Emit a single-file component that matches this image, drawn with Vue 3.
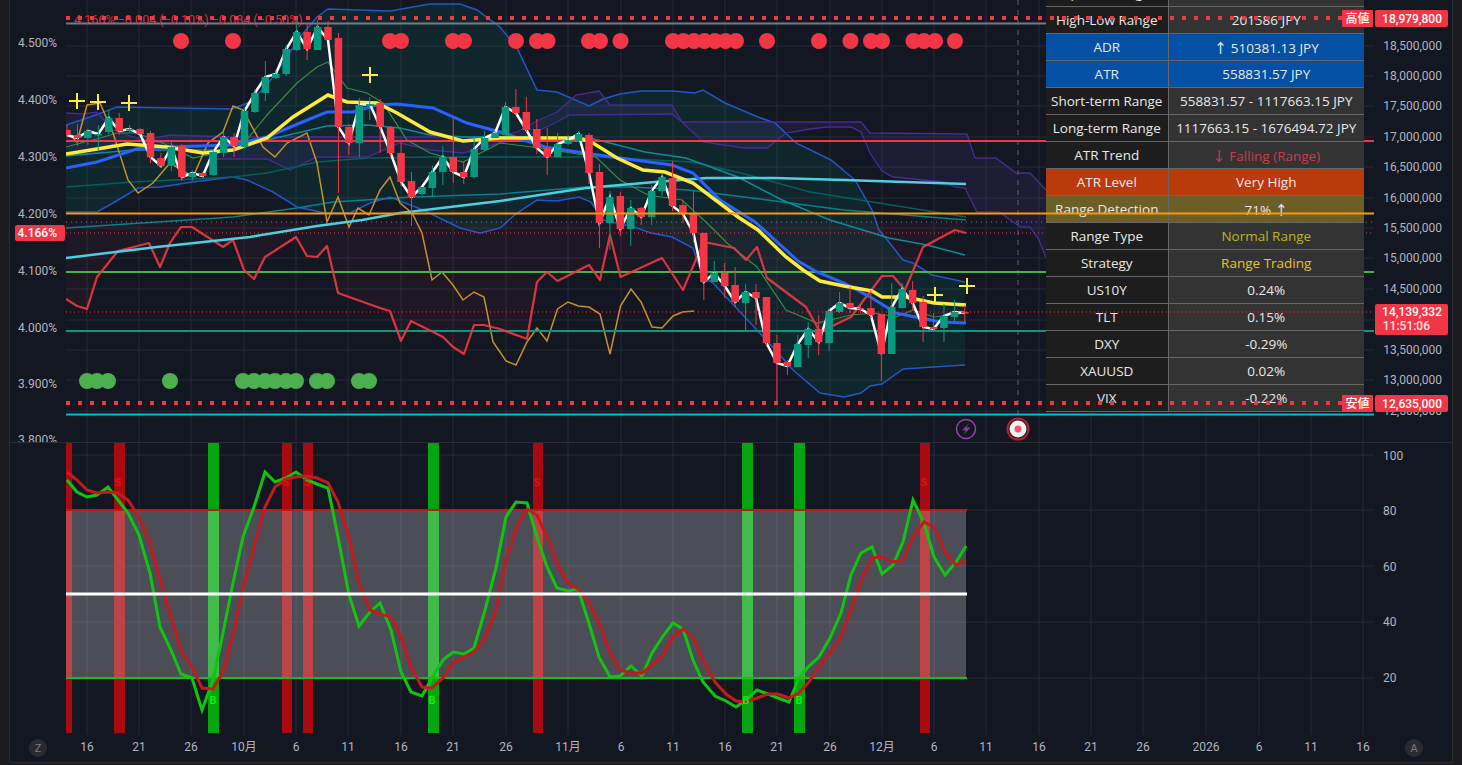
<style>
html,
body {
  margin: 0;
  background: #1c1c1e;
}
</style>

<style scoped>
.frame {
  width: 1462px;
  height: 765px;
  box-sizing: border-box;
  padding: 0 10px 3px;
  background: #1c1c1e;
  overflow: hidden;
  font-family: Roboto, "Noto Sans CJK JP", sans-serif;
}

.chart {
  display: grid;
  grid-template-columns: 56px 1308px 78px;
  grid-template-rows: 442px 293px 27px;
  background: #131722;
  box-shadow: -1px 0 0 #2a2b30, 1px 0 0 #2a2b30, 0 1px 0 #2a2b30;
}

svg {
  display: block;
}

.axis-text {
  font-size: 12px;
  fill: #b2b5be;
}

.pane {
  position: relative;
  overflow: hidden;
}

.divider {
  border-top: 1px solid #2a2e39;
  box-sizing: border-box;
}

.overlay {
  position: absolute;
  inset: 0;
}

.table-wrap {
  position: absolute;
  left: 980px;
  top: -21px;
}

table {
  border-collapse: collapse;
  table-layout: fixed;
  width: 318px;
  font-family: "Open Sans", "Noto Sans CJK JP", Roboto, sans-serif;
  font-size: 13.5px;
  font-weight: 500;
  color: #e8e8e8;
}

td {
  height: 27px;
  padding: 0;
  box-sizing: border-box;
  border: 1px solid #666;
  border-width: 1px 1px 1px 0;
  text-align: center;
  white-space: nowrap;
  background: #1d1d1d;
}

td:first-child {
  width: 122px;
  border-left: 0;
}

td:last-child {
  border-right: 0;
  background: #333;
}

tr.blue td {
  background: #0350a5;
}

tr.orange td {
  background: #bb3a0c;
}

tr.olive td {
  background: rgba(120, 105, 40, 0.88);
}

.falling {
  color: #c93d48;
}

.normal {
  color: #bdb51c;
}

.trading {
  color: #e3c52a;
}

.legend {
  font-size: 12.5px;
  fill: #f23645;
  opacity: 0.85;
}

.tag {
  fill: #f23645;
}

.tag-text {
  font-size: 12px;
  font-weight: 500;
  fill: #fff;
}

.mark {
  font-size: 11px;
  font-weight: 700;
}
</style>

<template>
  <div class="frame">
    <div class="chart">
      <!-- left scale -->
      <svg width="56" height="442" viewBox="10 0 56 442">
        <text v-for="t in PCT_TICKS" :key="t.label" class="axis-text" x="57" :y="t.y + 4" text-anchor="end">
          {{ t.label }}
        </text>
        <rect class="tag" x="15" y="225" width="50" height="16" rx="2" />
        <text class="tag-text" x="57" y="237" text-anchor="end">4.166%</text>
      </svg>

      <!-- price pane -->
      <div class="pane">
        <svg width="1308" height="442" viewBox="66 0 1308 442">
          <g stroke="#262a36" stroke-width="1">
            <line v-for="x in TIME_X" :key="x" :x1="x" :x2="x" y1="0" y2="442" />
            <line v-for="t in PRICE_TICKS" :key="t.label" x1="66" x2="1374" :y1="t.y" :y2="t.y" />
            <line x1="66" x2="1374" y1="320" y2="320" />
          </g>

          <polygon :points="bollFill" fill="rgba(0, 137, 123, 0.13)" />
          <polygon :points="kumoFill" fill="rgba(103, 58, 183, 0.13)" />
          <polygon :points="redFill" fill="rgba(242, 54, 69, 0.05)" />

          <polyline :points="BOLL_UP" fill="none" stroke="#2257c7" stroke-width="1.5" />
          <polyline :points="BOLL_LOW" fill="none" stroke="#2257c7" stroke-width="1.5" />
          <polyline :points="KUMO_A" fill="none" stroke="#4a2a94" stroke-width="1.3" />
          <polyline :points="KUMO_B" fill="none" stroke="#4a2a94" stroke-width="1.3" />
          <polyline :points="TEAL_B" fill="none" stroke="#04605f" stroke-width="1.5" />
          <polyline :points="TEAL_C" fill="none" stroke="#07808c" stroke-width="1.5" />
          <polyline :points="TEAL_A" fill="none" stroke="#0a8c9c" stroke-width="1.5" />
          <polyline :points="GREEN_THIN" fill="none" stroke="#3a8a40" stroke-width="1.2" />
          <polyline :points="ORANGE_THIN" fill="none" stroke="#c4912a" stroke-width="1.5" />

          <line x1="1018" x2="1018" y1="0" y2="415" stroke="#5d606b" stroke-dasharray="5 5" />
          <line x1="66" x2="1046" y1="23.5" y2="23.5" stroke="#787b86" stroke-width="2" />
          <line x1="66" x2="1374" y1="141" y2="141" stroke="#f23645" stroke-width="2" />
          <line x1="66" x2="1374" y1="272" y2="272" stroke="#4caf50" stroke-width="2" />
          <line x1="66" x2="1374" y1="331" y2="331" stroke="#089981" stroke-width="2" />
          <line x1="66" x2="1374" y1="414.5" y2="414.5" stroke="#00bcd4" stroke-width="2" />
          <line x1="66" x2="1374" y1="222" y2="222" stroke="#787b86" stroke-width="1" stroke-dasharray="1 4" />
          <line x1="66" x2="1374" y1="233" y2="233" stroke="#f23645" stroke-width="1" stroke-dasharray="1 3" />

          <polyline :points="RED_LINE" fill="none" stroke="#f23645" stroke-width="2.2" stroke-linejoin="round" opacity="0.9" />
          <polyline :points="CYAN_LINE" fill="none" stroke="#4dd0e1" stroke-width="2.5" />
          <polyline :points="BLUE_LINE" fill="none" stroke="#2962ff" stroke-width="3" />
          <polyline :points="YELLOW_LINE" fill="none" stroke="#ffeb3b" stroke-width="3.5" />
          <polyline :points="closeLine" fill="none" stroke="#fff" stroke-width="2.5" />

          <g v-for="c in candles" :key="c.x">
            <line :x1="c.x" :x2="c.x" :y1="c.hi" :y2="c.lo" :stroke="c.color" stroke-width="1" />
            <rect :x="c.x - 3.75" :y="c.top" width="7.5" :height="Math.max(c.bottom - c.top, 1.5)" :fill="c.color" />
          </g>

          <circle v-for="x in RED_DOTS" :key="x" :cx="x" cy="41" r="8" fill="#f23645" />
          <circle v-for="x in GREEN_DOTS" :key="x" :cx="x" cy="381" r="8" fill="#4caf50" />

          <g v-for="p in CROSSES" :key="p[0]" stroke="#ffeb3b" stroke-width="2">
            <line :x1="p[0] - 8" :x2="p[0] + 8" :y1="p[1]" :y2="p[1]" />
            <line :x1="p[0]" :x2="p[0]" :y1="p[1] - 8" :y2="p[1] + 8" />
          </g>

          <!-- bolt -->
          <circle cx="966" cy="429" r="9.5" fill="none" stroke="#9c3bb5" stroke-width="1.5" />
          <path d="M969 423 L962 430.5 H965.8 L963.5 435 L970.5 427.5 H966.5 Z" fill="#8a35a2" />
          <!-- target -->
          <circle cx="1018" cy="429" r="10.5" fill="#131722" stroke="#b2222f" stroke-width="2" />
          <circle cx="1018" cy="429" r="8.5" fill="#f2f2f2" />
          <circle cx="1018" cy="429" r="3.5" fill="#f5566a" />
        </svg>

        <div class="table-wrap">
          <table>
            <tbody>
              <tr v-for="row in ROWS" :key="row.label" :class="row.cls">
                <td>{{ row.label }}</td>
                <td :class="row.valueCls">{{ row.value }}</td>
              </tr>
            </tbody>
          </table>
        </div>

        <svg class="overlay" width="1308" height="442" viewBox="66 0 1308 442">
          <text class="legend" x="74" y="24">4.166% −0.004 (−0.10%) −0.084 (−0.50%)</text>
          <line x1="66" x2="1374" y1="213.5" y2="213.5" stroke="#ff9800" stroke-width="2" />
          <line x1="66" x2="1374" y1="312" y2="312" stroke="#f23645" stroke-width="1" stroke-dasharray="1 3" />
          <line x1="66" x2="1342" y1="18" y2="18" stroke="#f23645" stroke-width="4" stroke-dasharray="4 8" />
          <line x1="66" x2="1342" y1="403" y2="403" stroke="#f23645" stroke-width="4" stroke-dasharray="4 8" />
          <rect class="tag" x="1342" y="10" width="31" height="17" rx="1" />
          <text class="tag-text" x="1357.5" y="23" text-anchor="middle">高値</text>
          <rect class="tag" x="1342" y="395" width="31" height="17" rx="1" />
          <text class="tag-text" x="1357.5" y="408" text-anchor="middle">安値</text>
        </svg>
      </div>

      <!-- right scale -->
      <svg width="78" height="442" viewBox="1374 0 78 442">
        <text v-for="t in PRICE_TICKS" :key="t.label" class="axis-text" x="1442" :y="t.y + 4" text-anchor="end">
          {{ t.label }}
        </text>
        <rect class="tag" x="1375" y="10" width="73" height="17" rx="2" />
        <text class="tag-text" x="1442" y="23" text-anchor="end">18,979,800</text>
        <rect class="tag" x="1375" y="304" width="73" height="31" rx="2" />
        <text class="tag-text" x="1442" y="316" text-anchor="end">14,139,332</text>
        <text class="tag-text" x="1430" y="330" text-anchor="end" opacity="0.85">11:51:06</text>
        <rect class="tag" x="1375" y="395" width="73" height="17" rx="2" />
        <text class="tag-text" x="1442" y="408" text-anchor="end">12,635,000</text>
      </svg>

      <div class="divider"><svg width="56" height="292" /></div>

      <!-- oscillator pane -->
      <div class="divider">
        <svg width="1308" height="292" viewBox="66 443 1308 292">
          <g stroke="#262a36" stroke-width="1">
            <line v-for="x in TIME_X" :key="x" :x1="x" :x2="x" y1="443" y2="735" />
            <line v-for="t in OSC_TICKS" :key="t.label" x1="66" x2="1374" :y1="t.y" :y2="t.y" />
          </g>
          <rect
            v-for="b in OSC_BARS"
            :key="b.x"
            :x="b.x"
            y="443"
            :width="b.w"
            height="290"
            :fill="b.buy ? '#05a50f' : '#a80a10'"
          />
          <rect x="66" y="510" width="900" height="168" fill="rgba(255, 255, 255, 0.24)" />
          <line x1="66" x2="967" y1="510" y2="510" stroke="#c8151a" stroke-width="2" />
          <line x1="66" x2="967" y1="678" y2="678" stroke="#0ec40e" stroke-width="2" />
          <polyline :points="K_LINE" fill="none" stroke="#12c412" stroke-width="3" />
          <polyline :points="D_LINE" fill="none" stroke="#c41a1e" stroke-width="3" />
          <line x1="66" x2="967" y1="594" y2="594" stroke="#fff" stroke-width="3" />
          <text v-for="x in SELL_X" :key="x" class="mark" :x="x" y="486" text-anchor="middle" fill="#d81515">S</text>
          <text v-for="x in BUY_X" :key="x" class="mark" :x="x" y="704" text-anchor="middle" fill="#0cf00c">B</text>
        </svg>
      </div>

      <svg class="divider" width="78" height="293" viewBox="1374 442 78 293">
        <text v-for="t in OSC_TICKS" :key="t.label" class="axis-text" x="1383" :y="t.y + 4">{{ t.label }}</text>
      </svg>

      <!-- time scale -->
      <svg width="56" height="27" viewBox="10 735 56 27">
        <circle cx="38" cy="748" r="9" fill="#2a2b30" />
        <text x="38" y="752" text-anchor="middle" font-size="11" fill="#787b86">Z</text>
      </svg>
      <svg width="1308" height="27" viewBox="66 735 1308 27">
        <text v-for="t in TIME_TICKS" :key="t.x" class="axis-text" :x="t.x" y="751" text-anchor="middle">
          {{ t.label }}
        </text>
      </svg>
      <svg width="78" height="27" viewBox="1374 735 78 27">
        <circle cx="1414" cy="748" r="9" fill="#2a2b30" />
        <text x="1414" y="752" text-anchor="middle" font-size="11" fill="#787b86">A</text>
      </svg>
    </div>
  </div>
</template>

<script setup>
const PCT_TICKS = [
  { label: '4.500%', y: 43 },
  { label: '4.400%', y: 100 },
  { label: '4.300%', y: 157 },
  { label: '4.200%', y: 214 },
  { label: '4.100%', y: 271 },
  { label: '4.000%', y: 328 },
  { label: '3.900%', y: 384 },
  { label: '3.800%', y: 440 },
];

const PRICE_TICKS = [
  { label: '18,500,000', y: 46 },
  { label: '18,000,000', y: 76 },
  { label: '17,500,000', y: 106 },
  { label: '17,000,000', y: 137 },
  { label: '16,500,000', y: 167 },
  { label: '16,000,000', y: 198 },
  { label: '15,500,000', y: 228 },
  { label: '15,000,000', y: 258 },
  { label: '14,500,000', y: 289 },
  { label: '13,500,000', y: 350 },
  { label: '13,000,000', y: 380 },
  { label: '12,500,000', y: 411 },
];

const OSC_TICKS = [
  { label: '100', y: 455 },
  { label: '80', y: 510 },
  { label: '60', y: 566 },
  { label: '40', y: 622 },
  { label: '20', y: 678 },
];

const TIME_TICKS = [
  [87, '16'], [139, '21'], [191, '26'], [244, '10月'], [296, '6'], [348, '11'], [401, '16'], [453, '21'],
  [506, '26'], [568, '11月'], [621, '6'], [673, '11'], [725, '16'], [777, '21'], [830, '26'], [882, '12月'],
  [934, '6'], [986, '11'], [1039, '16'], [1091, '21'], [1143, '26'], [1206, '2026'], [1259, '6'], [1311, '11'],
  [1363, '16'],
].map(([x, label]) => ({ x, label }));
const TIME_X = TIME_TICKS.map((t) => t.x);

const ROWS = [
  { label: 'Spread Range', value: '' },
  { label: 'High-Low Range', value: '201586 JPY' },
  { label: 'ADR', value: '↑ 510381.13 JPY', cls: 'blue' },
  { label: 'ATR', value: '558831.57 JPY', cls: 'blue' },
  { label: 'Short-term Range', value: '558831.57 - 1117663.15 JPY' },
  { label: 'Long-term Range', value: '1117663.15 - 1676494.72 JPY' },
  { label: 'ATR Trend', value: '↓ Falling (Range)', valueCls: 'falling' },
  { label: 'ATR Level', value: 'Very High', cls: 'orange' },
  { label: 'Range Detection', value: '71% ↑', cls: 'olive' },
  { label: 'Range Type', value: 'Normal Range', valueCls: 'normal' },
  { label: 'Strategy', value: 'Range Trading', valueCls: 'trading' },
  { label: 'US10Y', value: '0.24%' },
  { label: 'TLT', value: '0.15%' },
  { label: 'DXY', value: '-0.29%' },
  { label: 'XAUUSD', value: '0.02%' },
  { label: 'VIX', value: '-0.22%' },
];

// top, bottom, high, low, direction (pixel rows read off the chart)
const CANDLES = [
  [130, 135, 125, 137, 'r'], [135, 138, 124, 146, 'r'], [131, 138, 129, 145, 'g'], [134, 135, 125, 150, 'g'],
  [118, 132, 110, 134, 'g'], [118, 131, 113, 135, 'r'], [129, 130, 125, 133, 'g'], [129, 134, 128, 135, 'r'],
  [133, 157, 131, 163, 'r'], [158, 166, 153, 168, 'r'], [147, 166, 141, 171, 'g'], [146, 177, 144, 181, 'r'],
  [173, 177, 170, 181, 'g'], [173, 176, 172, 177, 'r'], [152, 175, 150, 176, 'g'], [137, 153, 132, 157, 'g'],
  [137, 146, 133, 157, 'r'], [111, 147, 108, 149, 'g'], [93, 112, 89, 113, 'g'], [77, 93, 61, 101, 'g'],
  [74, 78, 70, 79, 'g'], [49, 74, 45, 76, 'g'], [32, 50, 21, 51, 'g'], [32, 49, 23, 60, 'r'],
  [27, 50, 20, 50, 'g'], [27, 40, 21, 40, 'r'], [38, 127, 33, 193, 'r'], [127, 143, 124, 155, 'r'],
  [105, 143, 98, 157, 'g'], [104, 106, 97, 120, 'g'], [103, 127, 99, 153, 'r'], [127, 153, 126, 157, 'r'],
  [153, 182, 140, 186, 'r'], [181, 197, 172, 226, 'r'], [187, 194, 187, 195, 'g'], [172, 188, 166, 197, 'g'],
  [157, 172, 146, 185, 'g'], [157, 172, 118, 183, 'r'], [172, 177, 162, 184, 'r'], [149, 177, 137, 178, 'g'],
  [138, 150, 131, 151, 'g'], [133, 138, 131, 138, 'g'], [107, 135, 102, 135, 'g'], [107, 113, 89, 115, 'r'],
  [112, 130, 97, 132, 'r'], [129, 148, 119, 154, 'r'], [148, 157, 128, 175, 'r'], [144, 157, 133, 157, 'g'],
  [140, 144, 135, 145, 'g'], [134, 141, 131, 141, 'g'], [135, 173, 133, 184, 'r'], [172, 223, 164, 248, 'r'],
  [197, 223, 191, 250, 'g'], [196, 229, 192, 236, 'r'], [208, 229, 200, 246, 'g'], [208, 217, 207, 225, 'r'],
  [191, 217, 185, 225, 'g'], [177, 191, 173, 196, 'g'], [178, 206, 161, 211, 'r'], [205, 214, 200, 223, 'r'],
  [214, 233, 191, 242, 'r'], [233, 282, 233, 300, 'r'], [273, 282, 261, 282, 'g'], [273, 286, 263, 298, 'r'],
  [285, 302, 267, 307, 'r'], [292, 303, 284, 330, 'g'], [292, 298, 284, 325, 'r'], [297, 343, 297, 345, 'r'],
  [343, 363, 335, 402, 'r'], [362, 366, 360, 375, 'r'], [344, 367, 335, 367, 'g'], [329, 345, 322, 358, 'g'],
  [329, 342, 315, 355, 'r'], [311, 343, 308, 351, 'g'], [303, 312, 292, 313, 'g'], [303, 308, 287, 313, 'r'],
  [308, 309, 305, 313, 'r'], [308, 315, 290, 318, 'r'], [314, 354, 314, 381, 'r'], [307, 354, 283, 354, 'g'],
  [289, 308, 283, 308, 'g'], [290, 303, 281, 310, 'r'], [302, 327, 296, 342, 'r'], [327, 329, 313, 332, 'r'],
  [316, 328, 304, 342, 'g'], [312, 317, 300, 322, 'g'], [312, 313, 305, 322, 'r'],
];

const candles = CANDLES.map(([top, bottom, hi, lo, dir], i) => ({
  x: 67 + 10.44 * i,
  top,
  bottom,
  hi,
  lo,
  dir,
  color: dir === 'g' ? '#089981' : '#f23645',
}));
const closeLine = candles.map((c) => `${c.x},${c.dir === 'g' ? c.top : c.bottom}`).join(' ');

const RED_DOTS = [
  181, 233, 390, 401, 453, 464, 516, 537, 547.5, 589, 600, 620.5, 673, 683.5, 694, 704.5, 715, 725.5, 736, 767,
  819, 850.5, 871, 882, 913.5, 924, 935, 955,
];
const GREEN_DOTS = [87, 97, 108, 170, 243, 254, 265, 275, 286, 296, 317, 327, 359, 369];
const CROSSES = [[77, 101], [98, 102], [129, 103], [370, 75], [935, 295], [967, 286]];

const BOLL_UP =
  '66,125 90,117 117,107 232,109 250,102 267,85 283,63 300,37 317,17 328,9 390,11 430,4 460,4 477,10 500,27 517,48 537,90 557,92 589,106 603,99 620,94 641,91 672,91 695,93 703,90 725,103 758,117 775,123 796,143 831,160 855,180 872,210 879,230 889,242 903,260 913,263 932,275 965,282';
const BOLL_LOW =
  '66,212 97,212 113,203 138,188 160,187 193,182 233,177 247,180 273,192 297,207 325,213 350,213 370,203 390,197 423,210 460,228 480,233 500,228 517,213 537,200 557,201 579,197 591,202 603,220 634,227 651,233 672,237 693,248 703,277 713,283 741,313 769,343 793,370 820,393 844,397 861,393 870,386 882,384 903,369 965,365';
const KUMO_A =
  '66,113 83,114 97,112 113,130 143,140 170,135 233,137 293,137 400,137 500,137 517,132 537,121 557,112 576,95 599,91 610,105 672,105 682,122 861,122 870,133 967,134 975,158 996,158 1016,173 1030,173 1046,190';
const KUMO_B =
  '66,155 100,153 120,140 167,143 217,159 267,159 290,170 317,157 367,157 400,143 430,150 463,153 500,143 530,135 557,122 569,115 672,114 682,122 703,142 744,148 767,148 786,133 810,129 827,127 851,127 861,132 870,153 882,171 893,177 944,182 955,187 965,188 977,212 999,212 1020,227 1030,227 1039,240 1046,258';
const TEAL_A =
  '66,156 133,150 233,150 267,140 327,126 367,125 400,128 430,135 467,137 500,137 590,138 645,152 686,158 738,177 782,200 830,220 889,238 927,245 965,255';
const TEAL_B =
  '66,187 133,182 233,177 267,173 317,162 367,158 433,157 500,157 596,157 693,162 741,173 810,192 879,203 966,217';
const TEAL_C =
  '66,228 233,217 297,208 333,202 413,197 500,194 586,187 610,187 631,187 689,190 775,201 844,210 966,220';
const CYAN_LINE =
  '66,258 157,247 250,237 317,226 362,220 400,213 500,201 586,188 655,182 707,178 775,178 844,180 966,184';
const GREEN_THIN =
  '66,147 100,138 117,133 137,133 167,145 193,158 220,152 240,148 267,115 297,83 317,67 328,62 347,88 367,93 383,103 407,140 430,153 463,162 500,143 540,148 596,157 620,180 648,195 682,200 707,223 727,243 757,267 786,310 817,323 851,315 875,313 896,317 913,310 934,317 966,313';
const ORANGE_THIN =
  '67,132 77,142 87,105 100,103 113,133 128,180 138,193 153,183 170,163 193,177 208,143 223,132 233,106 243,110 263,147 275,157 287,143 307,133 317,163 327,222 338,197 349,227 358,208 369,215 380,190 390,177 400,203 412,213 422,233 432,280 442,272 453,285 463,300 474,292 484,297 493,342 500,352 506,361 516,365 527,342 537,328 547,341 557.5,309 568,302 578.5,306 589,307 600,314 610,354 620.5,306 631,289 641,302 652,327 662,328 673,316 682.5,312 694,311';
const RED_LINE =
  '66,299 77,306 87,309 97,277 118,251 149,243 160,267 170,243 181,227 192,227 223,247 233,240 244,270 254,279 265,257 296,237 307,256 317,257 327,246 338,293 380,308 390,311 401,341 411,321 443,337 453,347 464,354 474,325 484,325 500,329 527,339 537,282 547,272 557.5,281 589,265 600,280 610,235 620.5,277 662,258 683,290 703,243 709,243 734,248 746,260 757,247 767,278 806,307 820,332 851,317 882,276 893,276 905,290 923,247 955,230 966,233';
const YELLOW_LINE =
  '66,154 97,149 127,144 167,147 203,153 233,150 267,138 293,117 328,95 347,102 377,103 397,113 430,132 463,141 500,138 579,138 593,143 617,158 643,170 665,172 693,183 738,217 758,230 786,257 803,270 820,281 844,286 872,291 882,297 906,297 934,303 966,305';
const BLUE_LINE =
  '66,168 97,162 140,148 200,146 233,145 267,137 300,123 327,112 353,112 377,105 397,104 433,108 467,123 500,132 545,147 584,153 620,158 672,165 693,173 720,200 755,222 786,250 798,261 817,272 844,283 872,298 896,313 920,318 941,322 966,323';

const between = (a, b) => a + ' ' + b.split(' ').reverse().join(' ');
const bollFill = between(BOLL_UP, BOLL_LOW);
const kumoFill = between(KUMO_A, KUMO_B);
const redFill = RED_LINE + ' 966,222 66,222';

const OSC_BARS = [
  { x: 66, w: 6 }, { x: 114, w: 11 }, { x: 208, w: 11, buy: true }, { x: 282, w: 10 }, { x: 303, w: 10 },
  { x: 428, w: 11, buy: true }, { x: 533, w: 10 }, { x: 742, w: 11, buy: true }, { x: 794, w: 11, buy: true },
  { x: 920, w: 10 },
];
const SELL_X = [118, 286, 307, 537, 924];
const BUY_X = [213, 432, 746, 799];

const K_LINE =
  '67,480 77,492 87,497 97,495 108,487 118,500 128,513 139,535 150,573 160,627 171,650 181,674 192,678 202,710 213,680 223,633 233,583 243,537 254,507 265,472 275,482 286,478 296,472 307,480 317,484 328,488 338,537 349,595 359,626 370,612 380,603 391,630 401,672 411,692 422,696 432,678 443,660 453,652 464,654 474,648 485,610 496,568 506,517 516,502 527,503 537,537 547,567 557,588 568,591 578,589 588,620 599,657 610,677 620,676 631,666 642,676 652,653 663,636 673,623 683,629 693,660 703,682 715,696 726,701 736,707 746,700 757,690 768,694 778,698 789,702 799,678 808,667 819,657 830,638 841,613 851,575 861,553 872,547 882,574 893,565 903,542 913,500 924,523 934,557 945,575 956,562 966,546';
const D_LINE =
  '67,472 77,480 87,490 97,493 108,492 118,493 128,500 139,517 150,543 160,580 171,617 181,651 192,667 202,688 213,689 223,672 233,635 243,587 254,547 265,507 275,487 286,479 296,477 307,476 317,478 328,483 338,502 349,537 359,583 370,610 380,614 391,617 401,637 411,667 422,687 432,688 443,678 453,663 464,657 474,652 485,638 496,610 506,560 516,528 527,509 537,515 547,537 557,563 568,583 578,589 588,601 599,623 610,653 620,670 631,673 642,673 652,665 663,655 673,637 683,629 693,638 703,660 715,682 726,694 736,701 746,702 757,698 768,694 778,694 789,698 799,693 808,683 819,667 830,653 841,637 851,610 861,580 872,558 882,557 893,562 903,560 913,537 924,522 934,527 945,552 956,565 966,560';
</script>
